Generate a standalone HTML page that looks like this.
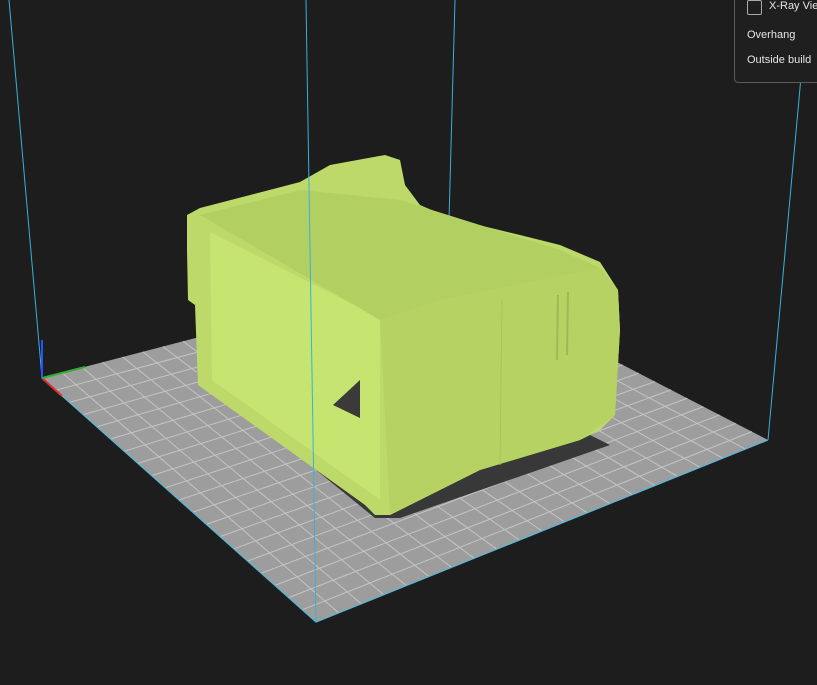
<!DOCTYPE html>
<html><head><style>
html,body{margin:0;padding:0;background:#1d1d1d;width:817px;height:685px;overflow:hidden}
#p{position:absolute;left:734px;top:-6px;width:90px;height:87px;border:1px solid #5a5a5a;border-radius:4px;background:#1f1f1f;font-family:"Liberation Sans",sans-serif;font-size:11px;color:#e6e6e6}
#p div{position:absolute;left:12px;white-space:nowrap}
</style></head><body>
<svg id="s" width="817" height="685" style="position:absolute;left:0;top:0">
<polygon points="42,378 445,273 768,440 316,622" fill="#9d9d9d"/>
<g id="g" stroke="#c4c4c4" stroke-width="1"></g>
<polyline points="42,378 316,622 768,440" fill="none" stroke="#55b8d8" stroke-width="1.2"/>
<line x1="9" y1="0" x2="42" y2="378" stroke="#3ab0d8" stroke-width="1"/>
<line x1="808" y1="0" x2="768" y2="440" stroke="#3ab0d8" stroke-width="1"/>
<line x1="455" y1="0" x2="449" y2="220" stroke="#3ab0d8" stroke-width="1"/>
<polygon points="196,372 375,518 400,518 610,445 570,425 380,480" fill="#383838"/>
<polygon points="187,215 200,208 300,182 330,165 385,155 400,160 405,185 420,205 450,218 520,235 560,245 600,262 618,290 620,330 615,415 600,430 580,440 480,470 390,515 375,515 365,505 198,385 195,305 188,300 187,250" fill="#bcd96a"/>
<polygon points="210,232 380,318 380,500 212,380" fill="#c6e470"/>
<polygon points="200,215 300,190 400,200 560,250 600,268 440,300 380,320" fill="#b2cf62"/>
<polygon points="380,320 440,300 600,268 618,290 620,330 615,415 580,440 480,470 390,515" fill="#b5d263"/>
<line x1="502" y1="300" x2="500" y2="465" stroke="#a8c45a" stroke-width="1"/>
<line x1="558" y1="295" x2="557" y2="360" stroke="#9fba52" stroke-width="2"/>
<line x1="568" y1="292" x2="567" y2="355" stroke="#9fba52" stroke-width="2"/>
<polygon points="333,405 360,380 360,418" fill="#3a3a3a"/>
<line x1="42" y1="378" x2="42" y2="340" stroke="#2255ff" stroke-width="2"/>
<line x1="42" y1="378" x2="62" y2="396" stroke="#e03030" stroke-width="2"/>
<line x1="42" y1="378" x2="85" y2="367" stroke="#30b030" stroke-width="2"/>
<line x1="306" y1="0" x2="316" y2="622" stroke="#3ab0d8" stroke-width="1"/>
</svg>
<div id="p">
<div style="top:5px;left:12px;width:13px;height:13px;border:1px solid #aaa;border-radius:2px"></div>
<div style="top:5px;left:34px">X-Ray Vie</div>
<div style="top:34px">Overhang</div>
<div style="top:59px">Outside build</div>
</div>
<script>
var L=[42,378],B=[445,273],R=[768,440],F=[316,622],n=20,g=document.getElementById('g'),h='';
function lp(a,b,t){return [a[0]+(b[0]-a[0])*t,a[1]+(b[1]-a[1])*t]}
for(var i=1;i<n;i++){var t=i/n;var a=lp(L,F,t),b=lp(B,R,t);h+='<line x1="'+a[0]+'" y1="'+a[1]+'" x2="'+b[0]+'" y2="'+b[1]+'"/>';
a=lp(L,B,t);b=lp(F,R,t);h+='<line x1="'+a[0]+'" y1="'+a[1]+'" x2="'+b[0]+'" y2="'+b[1]+'"/>';}
g.innerHTML=h;
</script>
</body></html>
